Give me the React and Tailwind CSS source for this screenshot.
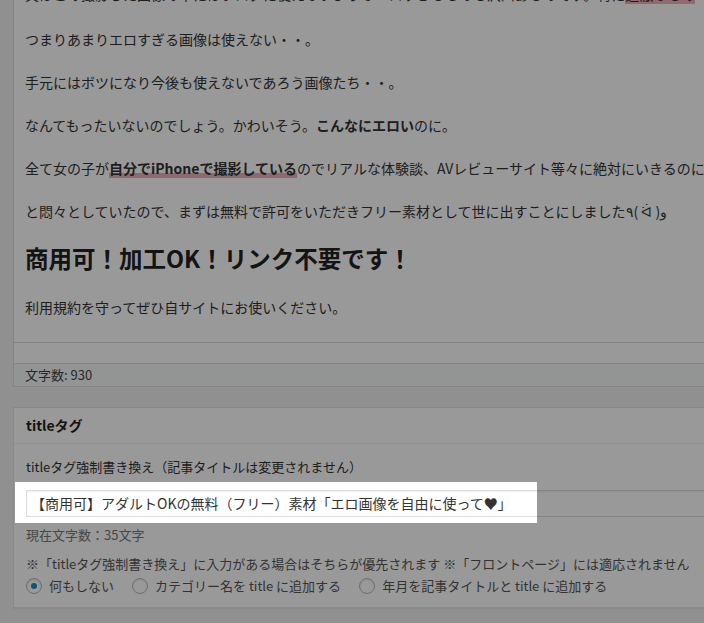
export default function App() {
  return (
    <div className="relative w-[704px] h-[623px] overflow-hidden bg-[#f1f1f1] text-[#333] font-['Noto_Sans_CJK_JP','Noto_Sans',sans-serif]">
      <div className="ml-[13px] w-[760px] flex flex-col">
        {/* editor */}
        <div className="bg-white border-l border-[#ddd] flex flex-col">
          <div className="flex flex-col px-[11px] pb-[24px] text-[14px]">
            <p className="-mt-[17px] mb-[23px] leading-[22px] whitespace-nowrap">
              実はこの撮影した画像の中にはブログに使えないようなエロすぎるものも沢山あるのです。特に<span className="bg-[linear-gradient(transparent_70%,#f0b0bc_70%)]">過激なもの</span>
            </p>
            <p className="mb-[21px] leading-[22px] whitespace-nowrap">つまりあまりエロすぎる画像は使えない・・。</p>
            <p className="mb-[21px] leading-[22px] whitespace-nowrap">手元にはボツになり今後も使えないであろう画像たち・・。</p>
            <p className="mb-[21px] leading-[22px] whitespace-nowrap">
              なんてもったいないのでしょう。かわいそう。<strong className="font-bold">こんなにエロい</strong>のに。
            </p>
            <p className="mb-[21px] leading-[22px] whitespace-nowrap">
              全て女の子が
              <strong className="font-bold bg-[linear-gradient(transparent_74%,#eeb0bb_74%)]">自分でiPhoneで撮影している</strong>
              のでリアルな体験談、AVレビューサイト等々に絶対にいきるのに
            </p>
            <p className="mb-[21px] leading-[22px] whitespace-nowrap">
              と悶々としていたので、まずは無料で許可をいただきフリー素材として世に出すことにしました٩( ᐛ )و
            </p>
            <h2 className="mb-[23px] text-[23.5px] leading-[30px] font-bold text-[#222] whitespace-nowrap">
              商用可！加工OK！リンク不要です！
            </h2>
            <p className="leading-[22px] whitespace-nowrap">利用規約を守ってぜひ自サイトにお使いください。</p>
          </div>
          <div className="h-[21px] border-t border-[#ddd]"></div>
          <div className="h-[24px] border-y border-[#ddd] bg-[#f6f7f7] px-[11px] text-[13px] leading-[22px] text-[#444]">
            文字数: 930
          </div>
        </div>

        <div className="h-[20px]"></div>

        {/* title tag box */}
        <div className="bg-white border border-[#e5e5e5] shadow-[0_1px_1px_rgba(0,0,0,0.04)]">
          <div className="h-[36px] px-[12px] border-b border-[#eee] flex items-center text-[14px] font-bold text-[#222]">
            titleタグ
          </div>
          <div className="px-[12px] pt-[13px] pb-[10px] text-[13px]">
            <p className="leading-[20px] text-[#333]">titleタグ強制書き換え（記事タイトルは変更されません）</p>
            <div className="relative mt-[13px]">
              <div className="h-[27px] border border-[#ddd] shadow-[inset_0_1px_2px_rgba(0,0,0,0.07)] bg-white px-[4px] text-[14px] leading-[25px] text-[#333] whitespace-nowrap">
                【商用可】アダルトOKの無料（フリー）素材「エロ画像を自由に使って♥」
              </div>
              <div className="absolute left-[-11px] top-[-8px] w-[522px] h-[41px] z-10 pointer-events-none shadow-[0_0_0_9999px_rgba(0,0,0,0.4)]"></div>
            </div>
            <p className="mt-[9px] leading-[18px] text-[#777]">現在文字数：35文字</p>
            <p className="mt-[10px] leading-[20px] text-[#555] whitespace-nowrap">
              ※「titleタグ強制書き換え」に入力がある場合はそちらが優先されます ※「フロントページ」には適応されません
            </p>
            <div className="mt-[1px] h-[22px] flex items-center gap-[18px] text-[#555] whitespace-nowrap">
              <label className="flex items-center gap-[7px]">
                <span className="w-[16px] h-[16px] rounded-full border border-[#b4b9be] bg-white shadow-[inset_0_1px_2px_rgba(0,0,0,0.1)] flex items-center justify-center">
                  <span className="w-[6px] h-[6px] rounded-full bg-[#1e8cbe]"></span>
                </span>
                何もしない
              </label>
              <label className="flex items-center gap-[7px]">
                <span className="w-[16px] h-[16px] rounded-full border border-[#b4b9be] bg-white shadow-[inset_0_1px_2px_rgba(0,0,0,0.1)]"></span>
                カテゴリー名を title に追加する
              </label>
              <label className="flex items-center gap-[7px]">
                <span className="w-[16px] h-[16px] rounded-full border border-[#b4b9be] bg-white shadow-[inset_0_1px_2px_rgba(0,0,0,0.1)]"></span>
                年月を記事タイトルと title に追加する
              </label>
            </div>
          </div>
        </div>
      </div>
    </div>
  );
}
